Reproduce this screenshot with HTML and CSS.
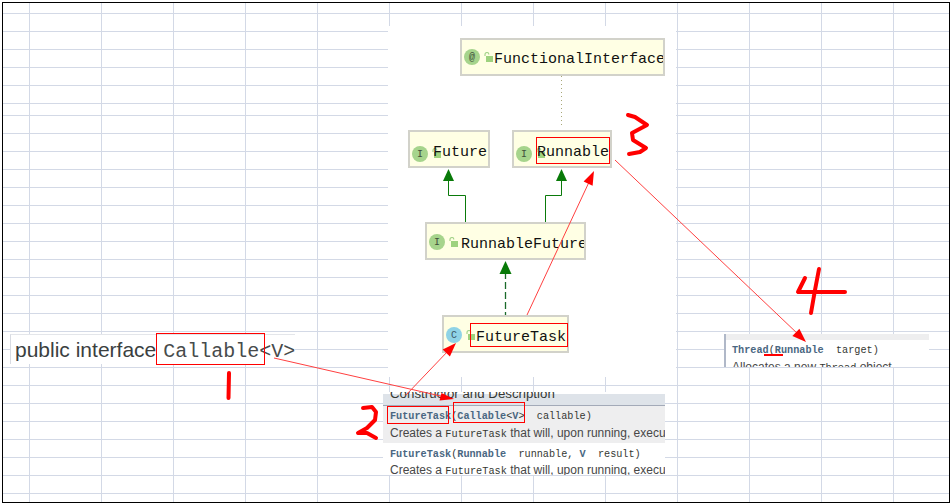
FILE: index.html
```html
<!DOCTYPE html>
<html lang="en">
<head>
<meta charset="utf-8">
<title>Callable, FutureTask, Runnable, Thread</title>
<link rel="stylesheet" href="styles.css">
</head>
<body>
<main class="page">
  <div class="sheet">
    <div class="rows rows-top"></div>
    <div class="rows rows-rest"></div>
  </div>

  <section class="diagram"></section>

  <div class="node node-functional">
    <span class="badge badge-green">@</span>
    <svg class="lock" viewBox="0 0 10 10"><path class="lock-shackle" d="M1 4V2.4a1.9 1.9 0 0 1 3.8 0"/><rect class="lock-body" x="2" y="4" width="7" height="6"/></svg>
    <span class="node-label">FunctionalInterface</span>
  </div>
  <div class="node node-future node-low">
    <span class="badge badge-green">I</span>
    <svg class="lock" viewBox="0 0 10 10"><path class="lock-shackle" d="M1 4V2.4a1.9 1.9 0 0 1 3.8 0"/><rect class="lock-body" x="2" y="4" width="7" height="6"/></svg>
    <span class="node-label">Future</span>
  </div>
  <div class="node node-runnable node-low">
    <span class="badge badge-green">I</span>
    <svg class="lock" viewBox="0 0 10 10"><path class="lock-shackle" d="M1 4V2.4a1.9 1.9 0 0 1 3.8 0"/><rect class="lock-body" x="2" y="4" width="7" height="6"/></svg>
    <span class="node-label">Runnable</span>
  </div>
  <div class="node node-runnable-future">
    <span class="badge badge-green">I</span>
    <svg class="lock" viewBox="0 0 10 10"><path class="lock-shackle" d="M1 4V2.4a1.9 1.9 0 0 1 3.8 0"/><rect class="lock-body" x="2" y="4" width="7" height="6"/></svg>
    <span class="node-label">RunnableFuture</span>
  </div>
  <div class="node node-future-task">
    <span class="badge badge-blue">C</span>
    <svg class="lock" viewBox="0 0 10 10"><path class="lock-shackle" d="M1 4V2.4a1.9 1.9 0 0 1 3.8 0"/><rect class="lock-body" x="2" y="4" width="7" height="6"/></svg>
    <span class="node-label">FutureTask</span>
  </div>

  <div class="signature"><span class="signature-lead">public interface</span><span class="signature-code">Callable&lt;V&gt;</span></div>

  <section class="ctor-table">
    <div class="ctor-head"><span>Constructor and Description</span></div>
    <div class="ctor-row ctor-row-alt">
      <div class="code-line"><b>FutureTask</b>(<b>Callable</b>&lt;<b>V</b>&gt;  callable)</div>
      <div class="desc-line">Creates a <code>FutureTask</code> that will, upon running, execu</div>
    </div>
    <div class="ctor-row">
      <div class="code-line"><b>FutureTask</b>(<b>Runnable</b>  runnable, <b>V</b>  result)</div>
      <div class="desc-line">Creates a <code>FutureTask</code> that will, upon running, execu</div>
    </div>
  </section>

  <section class="thread-card">
    <div class="thread-strip"></div>
    <div class="code-line"><b>Thread</b>(<b>Runnable</b>  target)</div>
    <div class="desc-line">Allocates a new <code>Thread</code> object.</div>
  </section>

  <svg class="marks" viewBox="0 0 950 504" width="950" height="504">
    <g class="edge-green">
      <path d="M448.5 180V195.5H465.5V222"/>
      <path d="M561.5 180V195.5H545.5V222"/>
      <path class="edge-dash" d="M505.5 272V315"/>
      <path class="edge-dot" d="M561.5 76V128"/>
    </g>
    <g class="head-green">
      <polygon points="448.5,169 443,181 454,181"/>
      <polygon points="561.5,169 556,181 567,181"/>
      <polygon points="505.5,261 499.5,274 511.5,274"/>
    </g>
    <g class="pen-line">
      <path d="M274 358L445 397"/>
      <path d="M406 395L449 350"/>
      <path d="M527 315L590 180"/>
      <path d="M615 160L799 335"/>
    </g>
    <g class="pen-head">
      <polygon points="454,399 439.5,400.5 441.500,393"/>
      <polygon points="456,343 449.9,356.6 442.7,349.6"/>
      <polygon points="594,171 592.6,185.8 583.6,181.6"/>
      <polygon points="806,342 792.4,335.9 799.4,328.7"/>
    </g>
    <g class="pen-box">
      <rect x="156.5" y="333.5" width="108" height="31"/>
      <rect x="536.5" y="137.5" width="73" height="26"/>
      <rect x="470.5" y="323.5" width="97" height="23"/>
      <rect x="387.5" y="406.5" width="61" height="17"/>
      <rect x="453.5" y="402.5" width="71" height="20"/>
    </g>
    <g class="pen-hand">
      <path d="M229 373L228.500 398"/>
      <path d="M363 408L372 407L376 412L375 420L367 428L358 433L367 433L376 438"/>
      <path d="M628 115L635 117L647 125L632 133L633 140L646 148L640 152L629 154"/>
      <path d="M819 269L815 290L811 313"/>
      <path d="M805 278L798 292L845 292"/>
      <path class="pen-thin" d="M764 355H783"/>
    </g>
  </svg>
</main>
</body>
</html>
```
FILE: styles.css
```css
* { box-sizing: border-box; }

html, body { margin: 0; padding: 0; background: #fff; }

.page {
  position: relative;
  width: 950px;
  height: 504px;
  overflow: hidden;
  background: #fff;
  padding: 2px 0 1px 2px;
  display: flex;
}

.sheet {
  flex: 1;
  border: 1px solid #000;
  display: flex;
  flex-direction: column;
  background-image: linear-gradient(to right, #d3d9e6 1px, transparent 1px);
  background-size: 72px 100%;
  background-position: 26px 0;
}

.rows { background-image: linear-gradient(to bottom, #d3d9e6 1px, transparent 1px); background-size: 100% 18px; }
.rows-top { height: 101px; background-position: 0 10px; }
.rows-rest { flex: 1; background-position: 0 11px; }

.diagram {
  position: absolute;
  left: 388px;
  top: 26px;
  width: 288px;
  height: 351px;
  background: #fff;
}

.node {
  position: absolute;
  display: flex;
  align-items: center;
  height: 38px;
  padding-left: 2px;
  background: #ffffe4;
  border: 2px solid #d2d2ca;
  overflow: hidden;
}

.node-functional { left: 460px; top: 38px; width: 205px; }
.node-future { left: 408px; top: 130px; width: 82px; }
.node-runnable { left: 512px; top: 130px; width: 100px; }
.node-runnable-future { left: 425px; top: 222px; width: 161px; }
.node-future-task { left: 442px; top: 315px; width: 127px; }

.badge {
  flex: none;
  width: 16px;
  height: 16px;
  border-radius: 50%;
  display: flex;
  align-items: center;
  justify-content: center;
  font: 10px "Liberation Mono", monospace;
  color: #40503a;
}
.badge-green { background: #a6d48c; }
.badge-blue { background: #8fd3e6; color: #3c5a68; }

.lock { flex: none; width: 10px; height: 10px; margin-left: 4px; }
.lock-shackle { fill: none; stroke: #a6d48c; stroke-width: 1.2; }
.lock-body { fill: #9ed27e; }

.node-label {
  flex: none;
  font: 15px/1 "Liberation Mono", monospace;
  color: #111;
  margin-top: 4px;
}

.node-low .badge { margin-top: 10px; }
.node-low .lock { margin-top: 8px; }
.node-low .node-label { margin-left: -9px; margin-top: 6px; }
.node-runnable-future .badge, .node-future-task .badge { margin-top: 2px; }
.node-runnable-future .lock, .node-future-task .lock { margin-top: 2px; }
.node-runnable-future .node-label { margin-left: 2px; margin-top: 6px; }
.node-future-task .node-label { margin-top: 6px; }

.signature {
  position: absolute;
  left: 10px;
  top: 334px;
  width: 285px;
  height: 30px;
  padding-left: 4px;
  background: #fff;
  border-top: 1px solid #e4e6ea;
  border-left: 1px solid #d8dbe2;
  display: flex;
  align-items: center;
  color: #3b3f3f;
}
.signature-lead { font: 21px/1 "Liberation Sans", Arial, sans-serif; white-space: nowrap; }
.signature-code { font: 20px/1 "Liberation Mono", monospace; color: #474b4c; margin-left: 7px; margin-top: 5px; }

.ctor-table {
  position: absolute;
  left: 383px;
  top: 392px;
  width: 282px;
  height: 83px;
  background: #fff;
  overflow: hidden;
}

.ctor-head {
  display: flow-root;
  height: 12px;
  margin-top: 2px;
  background: #dee3e9;
  border-bottom: 1px solid #a3aab8;
  padding-left: 7px;
  font: 13.3px/1 "Liberation Sans", Arial, sans-serif;
  color: #353833;
  white-space: nowrap;
}
.ctor-head span { display: block; margin-top: -7px; }

.ctor-row { height: 32px; padding: 4px 0 0 7px; }
.ctor-row .desc-line { margin-top: 1px; }
.ctor-row-alt { height: 37px; padding-top: 3px; background: #eeeeef; }
.ctor-row-alt .desc-line { margin-top: 2px; }

.code-line {
  font: 10.2px/15px "Liberation Mono", monospace;
  color: #353833;
  white-space: pre;
}
.code-line b { color: #4a6782; font-weight: bold; }

.desc-line {
  font: 12px/15px "Liberation Sans", Arial, sans-serif;
  color: #474747;
  white-space: nowrap;
}
.desc-line code { font: 10.25px/15px "Liberation Mono", monospace; color: #353833; }

.thread-card {
  position: absolute;
  left: 724px;
  top: 334px;
  width: 205px;
  height: 33px;
  background: #fff;
  border-left: 2px solid #b0b8c8;
  padding-left: 6px;
  overflow: hidden;
}
.thread-strip { height: 6px; margin-left: -6px; margin-bottom: 3px; background: #eeeeef; }
.thread-card .desc-line { margin-top: 2px; }

.marks { position: absolute; left: 0; top: 0; pointer-events: none; }

.edge-green path { fill: none; stroke: #0a7a0a; stroke-width: 1; }
.edge-green .edge-dash { stroke-dasharray: 7 3; stroke-width: 1.3; stroke: #1a6a2a; }
.edge-green .edge-dot { stroke: #a8a878; stroke-dasharray: 1 3; }
.head-green polygon { fill: #087a08; }

.pen-line path { fill: none; stroke: #ff4040; stroke-width: 1; }
.pen-head polygon { fill: #f00; }
.pen-box rect { fill: none; stroke: #f00; stroke-width: 1; }
.pen-hand path { fill: none; stroke: #f00; stroke-width: 4; stroke-linecap: round; stroke-linejoin: round; }
.pen-hand .pen-thin { stroke-width: 2; stroke-linecap: butt; }
```
